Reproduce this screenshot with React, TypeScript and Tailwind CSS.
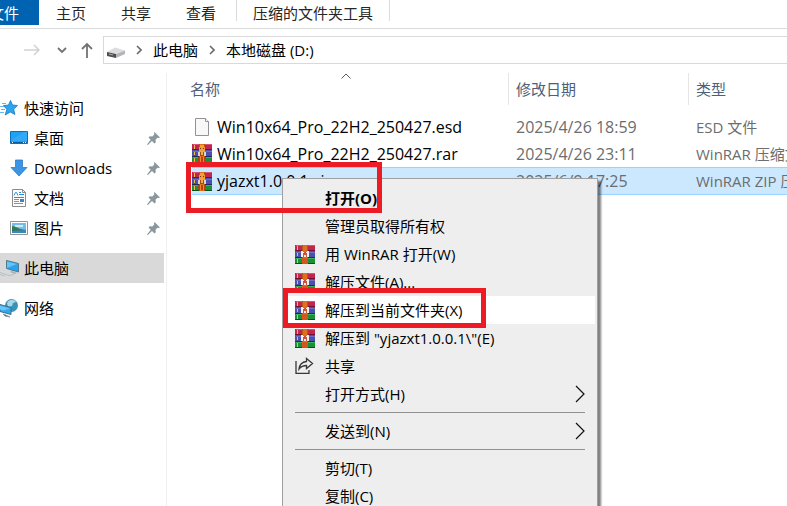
import React from 'react';

function Books({ archive = false }: { archive?: boolean }) {
  return (
    <svg width="20" height="19" viewBox="0 0 20 19" className="shrink-0" aria-hidden="true">
      <path d="M0 0h20v6H0z" fill="#c2264f" />
      <path d="M1 0h19v1H1z" fill="#d95479" />
      <path d="M0 5h20v1H0z" fill="#74122f" />
      <path d="M0 6h20v7H0z" fill="#4b4fae" />
      <path d="M1 7h19v1H1z" fill="#6d70c9" />
      <path d="M0 12h20v1H0z" fill="#25285f" />
      <path d="M0 13h20v6H0z" fill="#1d8f3a" />
      <path d="M1 13h19v1H1z" fill="#3db258" />
      <path d="M0 18h20v1H0z" fill="#0b4f1d" />
      <path d="M2 1h1v4H2zM2 8h1v3H2zM2 14h1v4H2z" fill="#e9c04a" />
      <path d="M7 0h6v19H7z" fill="#e0701c" />
      <path d="M7 0h1v19H7zM12 0h1v19h-1z" fill="#b85512" />
      {archive ? (
        <>
          <path d="M8 1h4v2h1v5H7V3h1z" fill="#f0a234" />
          <path d="M8 4h1v1H8zM11 4h1v1h-1z" fill="#6b3205" />
          <path d="M6 8h2v4H6zM12 8h2v4h-2z" fill="#d9d5d2" />
          <path d="M8 8h4v4H8z" fill="#9b4a18" />
          <path d="M9 7h2v4H9z" fill="#f0b045" />
          <path d="M6 13h8v5H6z" fill="#b54213" />
          <path d="M8 13h1v5H8zM11 13h1v5h-1z" fill="#ef8a28" />
        </>
      ) : (
        <>
          <path d="M6 6h8v6H6z" fill="#f6efec" />
          <path d="M8 8h1v4H8zM11 8h1v4h-1z" fill="#c2583a" />
          <path d="M8 5h4v2H8z" fill="#e0701c" />
          <path d="M9 7h2v3H9z" fill="#d64a3a" />
          <path d="M7 13h6v6H7z" fill="#d4561a" />
        </>
      )}
    </svg>
  );
}

function PageIcon() {
  return (
    <svg width="20" height="20" viewBox="0 0 20 20" className="shrink-0" aria-hidden="true">
      <path d="M3.500 1.500h10l3 3v14h-13z" fill="#f8f8f8" stroke="#929292" />
      <path d="M13.500 1.500v3h3" fill="#fff" stroke="#929292" />
    </svg>
  );
}

function StarIcon() {
  return (
    <svg width="18" height="18" viewBox="0 0 18 18" aria-hidden="true">
      <path d="M10.500 1.500l2 4.500 5 .5-3.800 3.600 1.200 5.400-4.700-2.500-5 3 1.600-5.700L3.500 6.500l5-.4z" fill="#2ba5ee" stroke="#1379c3" strokeWidth=".8" />
      <path d="M2 4.500h4M0 7.500h4M1 10.500h4M0 13.500h4" stroke="#61b9ea" strokeWidth="1" />
    </svg>
  );
}

function DesktopIcon() {
  return (
    <svg width="18" height="14" viewBox="0 0 18 14" aria-hidden="true">
      <path d="M.5.500h17v12H.5z" fill="#22a0f2" stroke="#0872bf" />
      <path d="M1 9L14 1h3v9H1z" fill="#42b3fb" opacity=".5" />
      <path d="M1 11h16v1H1z" fill="#075d9e" />
      <path d="M2 11h1v1H2zM13 11h1v1h-1zM15 11h1v1h-1z" fill="#fff" />
    </svg>
  );
}

function DownloadIcon() {
  return (
    <svg width="18" height="18" viewBox="0 0 18 18" aria-hidden="true">
      <path d="M5.500 1h7v7.500H17L9 17 1 8.500h4.500z" fill="#3c95e4" stroke="#2d7ec8" strokeWidth=".8" />
    </svg>
  );
}

function DocumentIcon() {
  return (
    <svg width="18" height="18" viewBox="0 0 18 18" aria-hidden="true">
      <path d="M2.500.500h10l3 3v14h-13z" fill="#fdfdfd" stroke="#8c8c8c" />
      <path d="M12.500.500v3h3" fill="none" stroke="#8c8c8c" />
      <path d="M4 6.500l1.500-3h1L8 6.500M9 3.500h2M9 5.500h5M4 8.500h10" fill="none" stroke="#2690d6" />
      <path d="M4 10.500h5M4 12.500h5M4 14.500h9" stroke="#8b9298" />
      <path d="M10 10h4v3h-4z" fill="#3d83bd" />
    </svg>
  );
}

function PictureIcon() {
  return (
    <svg width="18" height="14" viewBox="0 0 18 14" aria-hidden="true">
      <path d="M.5.500h17v13H.5z" fill="#fff" stroke="#8f9496" />
      <path d="M2 2h14v10H2z" fill="#72bde9" />
      <path d="M5 4h8v2H5z" fill="#d1ecf9" />
      <path d="M2 5l4 1 4 2 6 1v1H2z" fill="#3c7650" />
      <path d="M2 10l14-1v3H2z" fill="#368abf" />
    </svg>
  );
}

function ComputerIcon() {
  return (
    <svg width="20" height="18" viewBox="0 0 20 18" aria-hidden="true">
      <path d="M6.500 1.500l12 3v8.500l-12-3.500z" fill="#28a3ee" stroke="#57798e" />
      <path d="M7 2.500l10 2.500-10 4z" fill="#62c4fb" />
      <path d="M12 12l5 2-2 1-5-2z" fill="#a3afb6" />
      <path d="M0 13.500l9 3 5-1M0 15.500l5 1.500" fill="none" stroke="#b9c0c5" />
    </svg>
  );
}

function NetworkIcon() {
  return (
    <svg width="20" height="20" viewBox="0 0 20 20" aria-hidden="true">
      <circle cx="11.500" cy="7.500" r="6.500" fill="#3c91b7" />
      <path d="M7 5c2-4 7-4 9-1l-3 1-1 3-4 1z" fill="#a6d8e8" />
      <path d="M0 6.500l11 3v7l-11-3z" fill="#2fa8f0" stroke="#456e88" />
      <path d="M0 7.500l10 3-7 2-3-1z" fill="#65c7fa" />
      <path d="M3 16l5 2 2 1-5-1z" stroke="#8b9ca5" />
    </svg>
  );
}

function PinIcon() {
  return (
    <svg width="13" height="13" viewBox="0 0 13 13" aria-hidden="true">
      <path d="M7.500 0L13 5.500l-1.500.5-1-.2-2 2 .3 2.400L7.500 11.500 5 9 .8 13 0 12.500l3.700-4.700L1.500 5.500l1.300-1.300 2.500.2 2-2L7 1z" fill="#8b979f" />
    </svg>
  );
}

function DriveIcon() {
  return (
    <svg width="18" height="11" viewBox="0 0 18 11" aria-hidden="true">
      <path d="M0 5L8 .500l10 3L9 7z" fill="#dcdcde" />
      <path d="M0 5l9 2v4l-9-2z" fill="#4c4e50" />
      <path d="M9 7l9-3.500V7l-9 4z" fill="#b4b5b8" />
      <path d="M2 7l4 1" stroke="#a5b7a7" />
    </svg>
  );
}

function ShareIcon() {
  return (
    <svg width="20" height="18" viewBox="0 0 20 18" fill="none" stroke="#383838" strokeWidth="1.300" aria-hidden="true">
      <path d="M1 4v12.300h13V13" />
      <path d="M11.500 1.500l6 5-6 5V8.500C8 8.500 6 9.500 4 12c.5-4.500 3.500-7 7.500-7.500z" />
    </svg>
  );
}

function Chevron() {
  return (
    <svg width="6" height="10" viewBox="0 0 6 10" className="mx-[11px] shrink-0" fill="none" stroke="#6a6a6a" strokeWidth="1.600" aria-hidden="true">
      <path d="M1 1l4 4-4 4" />
    </svg>
  );
}

const places = [
  { name: '桌面', icon: <DesktopIcon /> },
  { name: 'Downloads', icon: <DownloadIcon /> },
  { name: '文档', icon: <DocumentIcon /> },
  { name: '图片', icon: <PictureIcon /> },
];

const files = [
  { name: 'Win10x64_Pro_22H2_250427.esd', date: '2025/4/26 18:59', type: 'ESD 文件', icon: <PageIcon />, selected: false },
  { name: 'Win10x64_Pro_22H2_250427.rar', date: '2025/4/26 23:11', type: 'WinRAR 压缩文件', icon: <Books archive />, selected: false },
  { name: 'yjazxt1.0.0.1.zip', date: '2025/6/9 17:25', type: 'WinRAR ZIP 压缩文件', icon: <Books archive />, selected: true },
];

type Entry = { label: string; icon?: React.ReactNode; bold?: boolean; active?: boolean; submenu?: boolean };

const groups: Entry[][] = [
  [
    { label: '打开(O)', bold: true },
    { label: '管理员取得所有权' },
    { label: '用 WinRAR 打开(W)', icon: <Books /> },
    { label: '解压文件(A)...', icon: <Books /> },
    { label: '解压到当前文件夹(X)', icon: <Books />, active: true },
    { label: '解压到 "yjazxt1.0.0.1\\"(E)', icon: <Books /> },
    { label: '共享', icon: <ShareIcon /> },
    { label: '打开方式(H)', submenu: true },
  ],
  [{ label: '发送到(N)', submenu: true }],
  [{ label: '剪切(T)' }, { label: '复制(C)' }],
];

function Ribbon() {
  return (
    <div className="flex h-[29px] items-start border-b border-[#dadbdc] text-[#262626]">
      <button className="flex h-[25px] w-[39px] items-center justify-end overflow-hidden bg-[#0063b1] pr-5 whitespace-nowrap text-white">
        <span>文件</span>
      </button>
      <div className="flex h-[25px] items-center gap-[35px] pr-5 pl-[17px]">
        <button>主页</button>
        <button>共享</button>
        <button>查看</button>
      </div>
      <button className="h-[21px] border-x border-[#dadbdc] px-4">
        <span className="flex h-[25px] items-center">压缩的文件夹工具</span>
      </button>
    </div>
  );
}

function AddressBar() {
  return (
    <div className="flex items-center pt-[7px] pl-6 text-black">
      <button aria-label="前进">
        <svg width="16" height="12" viewBox="0 0 16 12" fill="none" stroke="#d2d2d2" strokeWidth="1.500">
          <path d="M0 6h14.500M10 1l5 5-5 5" />
        </svg>
      </button>
      <button aria-label="最近浏览的位置" className="ml-[17px]">
        <svg width="10" height="7" viewBox="0 0 10 7" fill="none" stroke="#737373" strokeWidth="1.800">
          <path d="M1 1l4 4 4-4" />
        </svg>
      </button>
      <button aria-label="上移" className="ml-[14px]">
        <svg width="12" height="16" viewBox="0 0 12 16" fill="none" stroke="#737373" strokeWidth="1.800">
          <path d="M6 16V2M1 7l5-5 5 5" />
        </svg>
      </button>
      <nav aria-label="地址" className="ml-[10px] flex h-7 flex-1 items-center border-y border-l border-[#d9d9d9] pl-[3px] whitespace-nowrap">
        <span className="mt-1"><DriveIcon /></span>
        <Chevron />
        <button>此电脑</button>
        <Chevron />
        <button>本地磁盘 (D:)</button>
      </nav>
    </div>
  );
}

function Sidebar() {
  return (
    <aside className="w-[167px] shrink-0 border-r border-[#f0f0f0] pt-5 pr-[2px] text-black">
      <button className="flex h-[30px] w-full items-center gap-[6px]">
        <StarIcon />
        快速访问
      </button>
      {places.map((p) => (
        <button key={p.name} className="flex h-[30px] w-full items-center gap-[6px] pr-1 pl-[10px]">
          {p.icon}
          <span className="flex-1 text-left">{p.name}</span>
          <PinIcon />
        </button>
      ))}
      <button className="mt-[10px] flex h-[30px] w-full items-center gap-1 bg-[#d9d9d9]">
        <ComputerIcon />
        此电脑
      </button>
      <button className="mt-[10px] flex h-[30px] w-full items-center gap-1">
        <NetworkIcon />
        网络
      </button>
    </aside>
  );
}

function FileTable() {
  return (
    <div className="min-w-0 flex-1 overflow-hidden pl-4">
      <table className="w-full table-fixed border-separate border-spacing-0 text-left whitespace-nowrap">
        <colgroup>
          <col className="w-[325px]" />
          <col className="w-[180px]" />
          <col />
        </colgroup>
        <thead className="text-[#4c607a]">
          <tr className="h-10 align-top">
            <th className="p-0 font-normal">
              <div className="relative flex h-8 items-center pl-[7px]">
                名称
                <svg width="10" height="6" viewBox="0 0 10 6" fill="none" stroke="#5c5c5c" className="absolute inset-x-0 top-0 mx-auto" aria-hidden="true">
                  <path d="M.5 5.500L5 1l4.500 4.500" />
                </svg>
              </div>
            </th>
            <th className="p-0 font-normal">
              <div className="flex h-8 items-center border-l border-[#e5e5e5] pl-[7px]">修改日期</div>
            </th>
            <th className="p-0 font-normal">
              <div className="flex h-8 items-center border-l border-[#e5e5e5] pl-[7px]">类型</div>
            </th>
          </tr>
        </thead>
        <tbody className="text-[#6d6d6d]">
          {files.map((f) => {
            const cell = f.selected ? 'flex h-7 items-center border-y border-[#99d1ff] bg-[#cce8ff]' : 'flex h-[27px] items-center';
            return (
              <tr key={f.name} aria-selected={f.selected}>
                <td className="p-0 pl-[9px] text-base leading-5">
                  <div className={cell + ' gap-[5px] text-black'}>
                    {f.icon}
                    {f.name}
                  </div>
                </td>
                <td className="p-0 text-base leading-5"><div className={cell + ' pl-2'}>{f.date}</div></td>
                <td className="p-0"><div className={cell + ' pl-2'}>{f.type}</div></td>
              </tr>
            );
          })}
        </tbody>
      </table>
    </div>
  );
}

function ContextMenu() {
  return (
    <div role="menu" className="absolute top-[178px] left-[282px] w-[316px] border border-[#a0a0a0] bg-[#eeeeee] py-[5px] pr-[2px] pl-[2px] text-black shadow-[3px_3px_2px_#00000080]">
      {groups.map((group, i) => (
        <React.Fragment key={i}>
          {i > 0 && <hr className="my-1 mr-[10px] ml-[10px] border-[#919191]" />}
          {group.map((e) => (
            <button
              key={e.label}
              role="menuitem"
              className={'flex h-7 w-full items-center pr-[10px] pl-[10px] text-left ' + (e.active ? 'bg-white ' : '') + (e.bold ? 'font-bold' : '')}
            >
              <span className="w-[30px] shrink-0">{e.icon}</span>
              <span className="flex-1 whitespace-nowrap">{e.label}</span>
              {e.submenu && (
                <svg width="10" height="18" viewBox="0 0 10 18" fill="none" stroke="#111" strokeWidth="1.200" aria-hidden="true">
                  <path d="M1 1l8 8-8 8" />
                </svg>
              )}
            </button>
          ))}
        </React.Fragment>
      ))}
    </div>
  );
}

export default function App() {
  return (
    <div className="relative flex h-screen flex-col overflow-hidden bg-white font-['Open_Sans','Noto_Sans_CJK_SC',sans-serif] text-[15px] leading-5">
      <Ribbon />
      <AddressBar />
      <main className="mt-[9px] flex flex-1">
        <Sidebar />
        <FileTable />
      </main>
      <ContextMenu />
      <div className="pointer-events-none absolute top-[162px] left-[186px] h-[51px] w-[196px] border-[5px] border-[#ed1c24]" />
      <div className="pointer-events-none absolute top-[288px] left-[283px] h-10 w-[203px] border-[5px] border-[#ed1c24]" />
    </div>
  );
}
